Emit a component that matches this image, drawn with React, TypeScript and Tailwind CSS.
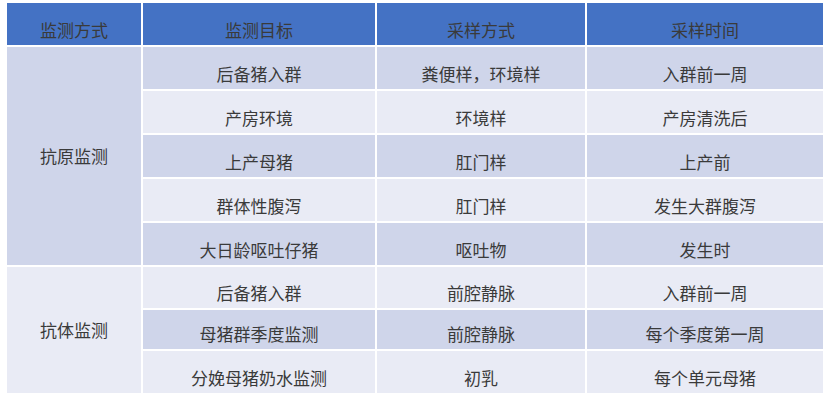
import React from 'react';

const font = { fontFamily: '"Noto Sans CJK SC", "Liberation Sans", sans-serif' };

type Row = { target: string; method: string; time: string; dark: boolean; h: string };

const antigen: Row[] = [
  { target: '后备猪入群', method: '粪便样，环境样', time: '入群前一周', dark: true, h: 'h-[42px]' },
  { target: '产房环境', method: '环境样', time: '产房清洗后', dark: false, h: 'h-[42px]' },
  { target: '上产母猪', method: '肛门样', time: '上产前', dark: true, h: 'h-[42px]' },
  { target: '群体性腹泻', method: '肛门样', time: '发生大群腹泻', dark: false, h: 'h-[42px]' },
  { target: '大日龄呕吐仔猪', method: '呕吐物', time: '发生时', dark: true, h: 'h-[42px]' },
];

const antibody: Row[] = [
  { target: '后备猪入群', method: '前腔静脉', time: '入群前一周', dark: false, h: 'h-[41px]' },
  { target: '母猪群季度监测', method: '前腔静脉', time: '每个季度第一周', dark: true, h: 'h-[39px]' },
  { target: '分娩母猪奶水监测', method: '初乳', time: '每个单元母猪', dark: false, h: 'h-[42px]' },
];

const Cell: React.FC<{ dark: boolean; h: string; children: React.ReactNode }> = ({ dark, h, children }) => (
  <div className={`${h} flex items-end justify-center pb-[4px] ${dark ? 'bg-[#cfd5ea]' : 'bg-[#e9ebf5]'}`}>
    {children}
  </div>
);

const Group: React.FC<{ label: string; dark: boolean; rows: Row[] }> = ({ label, dark, rows }) => (
  <div className="flex gap-[2px]">
    <div className={`w-[134px] flex items-center justify-center ${dark ? 'bg-[#cfd5ea]' : 'bg-[#e9ebf5]'}`}>
      {label}
    </div>
    <div className="flex flex-col gap-[2px]">
      {rows.map((r, i) => (
        <div key={i} className="flex gap-[2px]">
          <div className="w-[232px]"><Cell dark={r.dark} h={r.h}>{r.target}</Cell></div>
          <div className="w-[208px]"><Cell dark={r.dark} h={r.h}>{r.method}</Cell></div>
          <div className="w-[236px]"><Cell dark={r.dark} h={r.h}>{r.time}</Cell></div>
        </div>
      ))}
    </div>
  </div>
);

export default function App() {
  return (
    <div className="w-[829px] h-[400px] bg-white pt-[3px] pl-[7px]" style={font}>
      <div className="flex flex-col gap-[2px] text-[17px] leading-[22px] text-[#3a3a3a] w-[816px]">
        {/* Header */}
        <div className="flex gap-[2px] h-[42px]">
          {['监测方式', '监测目标', '采样方式', '采样时间'].map((t, i) => (
            <div
              key={t}
              className={`${['w-[134px]', 'w-[232px]', 'w-[208px]', 'w-[236px]'][i]} bg-[#4472c4] flex items-end justify-center pb-[4px]`}
            >
              {t}
            </div>
          ))}
        </div>
        <Group label="抗原监测" dark={true} rows={antigen} />
        <Group label="抗体监测" dark={false} rows={antibody} />
      </div>
    </div>
  );
}
